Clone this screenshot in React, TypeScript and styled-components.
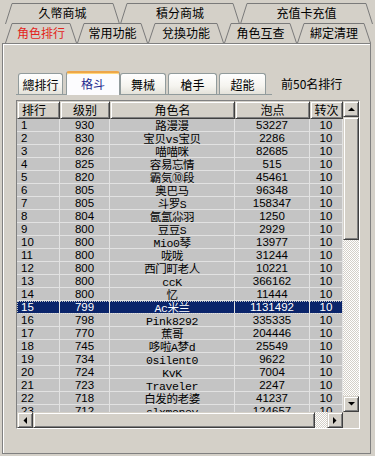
import React from "react";
import styled, { createGlobalStyle, css } from "styled-components";

const GlobalStyle = createGlobalStyle`
  html, body {
    margin: 0;
    padding: 0;
    background: #d4d0c8;
  }
  body {
    font-family: "Liberation Sans", "Noto Sans CJK SC", sans-serif;
    font-size: 12px;
    color: #000;
  }
`;

const raised = css`
  box-sizing: border-box;
  background: #d4d0c8;
  border: 1px solid;
  border-color: #d4d0c8 #404040 #404040 #d4d0c8;
  box-shadow: inset 1px 1px #fff, inset -1px -1px #808080;
`;

const Window = styled.div`
  width: 375px;
  height: 456px;
  box-sizing: border-box;
  padding-top: 2px;
  background: #d4d0c8;
  overflow: hidden;
`;

const TabRow = styled.div<{ $front?: boolean }>`
  display: flex;
  padding-left: 5px;
  height: ${(p) => (p.$front ? 21 : 22)}px;
  ${(p) =>
    p.$front &&
    css`
      margin-top: -2px;
      position: relative;
    `}
`;

const TabItem = styled.div<{ $w: number; $active?: boolean }>`
  position: relative;
  width: ${(p) => p.$w}px;
  height: 100%;
  display: flex;
  align-items: center;
  justify-content: center;
  font-family: "Noto Sans CJK SC", sans-serif;
  font-size: 12px;
  color: ${(p) => (p.$active ? "#e3241b" : "#000")};

  svg {
    position: absolute;
    left: 0;
    top: 0;
  }
  span {
    position: relative;
    line-height: 14px;
  }
`;

function Tab({ w, h, label, active }: { w: number; h: number; label: string; active?: boolean }) {
  const s = 7;
  return (
    <TabItem $w={w} $active={active}>
      <svg width={w} height={h}>
        <polyline
          points={`0.5,${h} ${s},1.5 ${w - s},1.5 ${w - 0.5},${h}`}
          fill="#d4d0c8"
          stroke="#7a7a7a"
        />
      </svg>
      <span>{label}</span>
    </TabItem>
  );
}

const Panel = styled.div`
  margin-left: 2px;
  width: 369px;
  height: 411px;
  box-sizing: border-box;
  border: 1px solid #808080;
  box-shadow: inset 1px 1px #fff;
  padding: 27px 0 0 13px;
`;

const SubTabBar = styled.div`
  display: flex;
  align-items: center;
`;

const SubStrip = styled.div`
  display: flex;
  align-items: flex-end;
  width: 256px;
  height: 24px;
  box-sizing: border-box;
  padding-left: 2px;
  border-bottom: 1px solid #919b9c;
`;

const SubTab = styled.div<{ $w: number; $gap: number; $active?: boolean }>`
  box-sizing: border-box;
  width: ${(p) => p.$w}px;
  margin-left: ${(p) => p.$gap}px;
  height: 21px;
  display: flex;
  align-items: center;
  justify-content: center;
  font-family: "Noto Sans CJK SC", sans-serif;
  font-size: 12px;
  border: 1px solid #919b9c;
  border-bottom: none;
  border-radius: 3px 3px 0 0;
  background: linear-gradient(#ffffff, #f5f4ef 60%, #e4e2da);
  color: #000;

  ${(p) =>
    p.$active &&
    css`
      position: relative;
      z-index: 1;
      height: 24px;
      margin-bottom: -1px;
      padding-bottom: 1px;
      background: #fcfcfe;
      border-top: 2px solid #eda64a;
      box-shadow: inset 0 1px #ffd77c;
      color: #1f2a8f;
    `}
`;

const RankNote = styled.div`
  margin-left: 9px;
  font-family: "Noto Sans CJK SC", sans-serif;
  font-size: 12px;
`;

const ListBox = styled.div`
  margin-top: 5px;
  width: 344px;
  height: 329px;
  box-sizing: border-box;
  border: 1px solid;
  border-color: #808080 #ffffff #ffffff #808080;
  display: grid;
  grid-template-columns: 326px 16px;
  grid-template-rows: 311px 16px;
`;

const Table = styled.div`
  display: flex;
  flex-direction: column;
  overflow: hidden;
  background: #c4c4c4;
`;

const COLS = "43px 50px 125px 75px 33px";

const HeaderRow = styled.div`
  display: grid;
  grid-template-columns: ${COLS};
  height: 18px;
  flex: none;
`;

const HeaderCell = styled.div<{ $left?: boolean }>`
  ${raised};
  display: flex;
  align-items: center;
  justify-content: ${(p) => (p.$left ? "flex-start" : "center")};
  padding-left: ${(p) => (p.$left ? 4 : 0)}px;
  font-family: "Noto Sans CJK SC", sans-serif;
  font-size: 12px;
  line-height: 14px;
`;

const Row = styled.div<{ $selected?: boolean }>`
  display: grid;
  grid-template-columns: ${COLS};
  height: 13px;
  flex: none;
  background: ${(p) => (p.$selected ? "#0a246a" : "transparent")};
  color: ${(p) => (p.$selected ? "#fff" : "#000")};
  ${(p) =>
    p.$selected &&
    css`
      outline: 1px dotted #c8c8c8;
      outline-offset: -1px;
    `}
`;

const Cell = styled.div<{ $left?: boolean; $name?: boolean }>`
  box-sizing: border-box;
  height: 13px;
  display: flex;
  align-items: flex-start;
  justify-content: ${(p) => (p.$left ? "flex-start" : "center")};
  padding-left: ${(p) => (p.$left ? 4 : 0)}px;
  padding-top: 1px;
  border-right: 1px solid #e2e2e2;
  border-bottom: 1px solid #e2e2e2;
  white-space: nowrap;
  line-height: 11px;
  font-size: 11.5px;
  ${(p) =>
    p.$name &&
    css`
      padding-top: 2px;
      font-family: "Liberation Mono", "Noto Sans CJK SC", monospace;
      font-size: 11.5px;
      letter-spacing: -0.4px;
    `}
`;

const checker = css`
  background: repeating-conic-gradient(#ffffff 0 25%, #d4d0c8 0 50%) 0 0 / 2px 2px;
`;

const VScroll = styled.div`
  display: flex;
  flex-direction: column;
  ${checker};
`;

const HScroll = styled.div`
  display: flex;
  ${checker};
`;

const ScrollButton = styled.div`
  ${raised};
  width: 16px;
  height: 16px;
  flex: none;
  display: flex;
  align-items: center;
  justify-content: center;
`;

const Thumb = styled.div<{ $len: number; $horizontal?: boolean }>`
  ${raised};
  flex: none;
  ${(p) => (p.$horizontal ? `width: ${p.$len}px;` : `height: ${p.$len}px;`)}
`;

const Spacer = styled.div`
  flex: 1;
`;

const Corner = styled.div`
  background: #d4d0c8;
`;

function Arrow({ dir }: { dir: "up" | "down" | "left" | "right" }) {
  const pts = {
    up: "0,4 7,4 3.5,0.5",
    down: "0,0 7,0 3.5,3.5",
    left: "4,0 4,7 0.5,3.5",
    right: "0,0 0,7 3.5,3.5",
  }[dir];
  const vertical = dir === "up" || dir === "down";
  return (
    <svg width={vertical ? 7 : 4} height={vertical ? 4 : 7}>
      <polygon points={pts} fill="#000" />
    </svg>
  );
}

const rows: [number, number, string, number][] = [
  [1, 930, "路漫漫", 53227],
  [2, 830, "宝贝vs宝贝", 2286],
  [3, 826, "喵喵咪", 82685],
  [4, 825, "容易忘情", 515],
  [5, 820, "霸気⑩段", 45461],
  [6, 805, "奥巴马", 96348],
  [7, 805, "斗罗S", 158347],
  [8, 804, "氤氳尛羽", 1250],
  [9, 800, "豆豆S", 2929],
  [10, 800, "Mio0琴", 13977],
  [11, 800, "咙咙", 31244],
  [12, 800, "西门町老人", 10221],
  [13, 800, "ccK", 366162],
  [14, 800, "忆", 11444],
  [15, 799, "Ac米兰", 1131492],
  [16, 798, "Pink8292", 335335],
  [17, 770, "蕉哥", 204446],
  [18, 745, "哆啦A梦d", 25549],
  [19, 734, "0silent0", 9622],
  [20, 724, "KvK", 7004],
  [21, 723, "Traveler", 2247],
  [22, 718, "白发的老婆", 41237],
  [23, 712, "slxmoney", 124657],
];

export default function App() {
  return (
    <>
      <GlobalStyle />
      <Window>
        <TabRow>
          <Tab w={115} h={22} label="久幣商城" />
          <Tab w={120} h={22} label="積分商城" />
          <Tab w={133} h={22} label="充值卡充值" />
        </TabRow>
        <TabRow $front>
          <Tab w={72} h={21} label="角色排行" active />
          <Tab w={71} h={21} label="常用功能" />
          <Tab w={76} h={21} label="兌換功能" />
          <Tab w={73} h={21} label="角色互查" />
          <Tab w={74} h={21} label="綁定清理" />
        </TabRow>
        <Panel>
          <SubTabBar>
            <SubStrip>
              <SubTab $w={45} $gap={0}>總排行</SubTab>
              <SubTab $w={54} $gap={3} $active>格斗</SubTab>
              <SubTab $w={46} $gap={0}>舞械</SubTab>
              <SubTab $w={49} $gap={2}>槍手</SubTab>
              <SubTab $w={47} $gap={2}>超能</SubTab>
            </SubStrip>
            <RankNote>前50名排行</RankNote>
          </SubTabBar>
          <ListBox>
            <Table>
              <HeaderRow>
                <HeaderCell $left>排行</HeaderCell>
                <HeaderCell>级别</HeaderCell>
                <HeaderCell>角色名</HeaderCell>
                <HeaderCell>泡点</HeaderCell>
                <HeaderCell>转次</HeaderCell>
              </HeaderRow>
              {rows.map(([rank, level, name, points]) => (
                <Row key={rank} $selected={rank === 15}>
                  <Cell $left>{rank}</Cell>
                  <Cell>{level}</Cell>
                  <Cell $name>{name}</Cell>
                  <Cell>{points}</Cell>
                  <Cell>10</Cell>
                </Row>
              ))}
            </Table>
            <VScroll>
              <ScrollButton>
                <Arrow dir="up" />
              </ScrollButton>
              <Thumb $len={123} />
              <Spacer />
              <ScrollButton>
                <Arrow dir="down" />
              </ScrollButton>
            </VScroll>
            <HScroll>
              <ScrollButton>
                <Arrow dir="left" />
              </ScrollButton>
              <Thumb $len={282} $horizontal />
              <Spacer />
              <ScrollButton>
                <Arrow dir="right" />
              </ScrollButton>
            </HScroll>
            <Corner />
          </ListBox>
        </Panel>
      </Window>
    </>
  );
}
